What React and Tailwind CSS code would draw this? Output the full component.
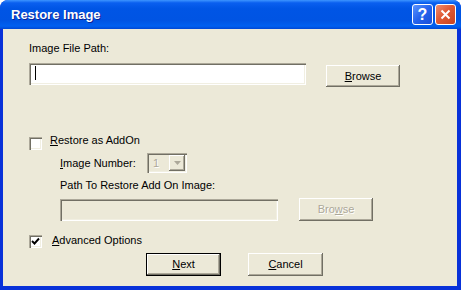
const sunken =
  "shadow-[inset_1px_1px_0_#aca899,inset_2px_2px_0_#716f64,inset_-1px_-1px_0_#ffffff,inset_-2px_-2px_0_#f1efe2]";
const raised =
  "shadow-[inset_-1px_-1px_0_#716f64,inset_1px_1px_0_#ffffff,inset_-2px_-2px_0_#aca899]";
const disabledText = "text-[#aca899] [text-shadow:1px_1px_0_#ffffff]";

function Button({ children, className = "", isDefault = false, disabled = false }) {
  return (
    <button
      className={`flex items-center justify-center bg-[#ece9d8] ${raised} ${
        isDefault ? "border border-black" : ""
      } ${disabled ? disabledText : "text-black"} ${className}`}
    >
      {children}
    </button>
  );
}

function Checkbox({ checked, className = "" }) {
  return (
    <div className={`w-[13px] h-[13px] shrink-0 bg-white ${sunken} flex items-center justify-center ${className}`}>
      {checked ? (
        <svg width="9" height="9" viewBox="0 0 9 9">
          <polyline points="1,4 3.5,6.5 8,1.5" fill="none" stroke="#000" strokeWidth="1.9" />
        </svg>
      ) : null}
    </div>
  );
}

export default function App() {
  return (
    <div className="w-[461px] h-[290px] bg-[#0831d9] rounded-t-[8px] flex flex-col overflow-hidden font-['Liberation_Sans',Arial,sans-serif]">
      <div className="h-[29px] shrink-0 flex items-center pl-[11px] pr-[5px] bg-[linear-gradient(180deg,#3d95ff_0%,#0a5fef_10%,#0055e5_30%,#0054e3_70%,#0060f0_90%,#0047d4_100%)]">
        <span className="flex-1 text-white font-bold text-[13px] leading-[16px] [text-shadow:1px_1px_0_#0c2596]">
          Restore Image
        </span>
        <div className="flex gap-[2px]">
          <div className="w-[21px] h-[21px] rounded-[3px] border border-white bg-[linear-gradient(135deg,#5b94ff_0%,#2563ec_50%,#1a4fd9_100%)] flex items-center justify-center text-white font-bold text-[16px] leading-none">
            ?
          </div>
          <div className="w-[21px] h-[21px] rounded-[3px] border border-white bg-[linear-gradient(135deg,#f08e6f_0%,#e05a35_45%,#c9431f_100%)] flex items-center justify-center">
            <svg width="11" height="11" viewBox="0 0 11 11">
              <path d="M1.5 1.5 L9.5 9.5 M9.5 1.5 L1.5 9.5" stroke="#fff" strokeWidth="2" />
            </svg>
          </div>
        </div>
      </div>

      <div className="flex-1 ml-[3px] mr-[4px] mb-[4px] bg-[#ece9d8] pl-[26px] pt-[13px] text-[11px] leading-[13px] text-black">
        <div>Image File Path:</div>
        <div className="mt-[8px] flex items-start">
          <div className={`relative w-[277px] h-[22px] bg-white ${sunken}`}>
            <div className="absolute left-[6px] top-[3px] w-px h-[14px] bg-black" />
          </div>
          <Button className="ml-[20px] mt-[2px] w-[74px] h-[22px]">
            <span className="underline">B</span>rowse
          </Button>
        </div>

        <div className="mt-[47px] flex items-start">
          <Checkbox className="mt-[3px]" />
          <span className="ml-[8px]">
            <span className="underline">R</span>estore as AddOn
          </span>
        </div>

        <div className="mt-[3px] ml-[31px] flex items-center h-[20px]">
          <span className="w-[87px]">
            <span className="underline">I</span>mage Number:
          </span>
          <div className={`w-[40px] h-[20px] bg-[#ece9d8] ${sunken} flex items-center pl-[6px] pr-[2px]`}>
            <span className={`flex-1 ${disabledText}`}>1</span>
            <div className={`w-[16px] h-[16px] bg-[#ece9d8] ${raised} flex items-center justify-center`}>
              <svg width="7" height="4" viewBox="0 0 7 4">
                <path d="M0 0 H7 L3.5 4 Z" fill="#aca899" />
              </svg>
            </div>
          </div>
        </div>

        <div className="mt-[6px] ml-[31px]">Path To Restore Add On Image:</div>
        <div className="mt-[7px] ml-[31px] flex items-start">
          <div className={`w-[218px] h-[22px] bg-[#ece9d8] ${sunken}`} />
          <Button disabled className="ml-[21px] -mt-[1px] w-[74px] h-[23px]">
            Bro<span className="underline">w</span>se
          </Button>
        </div>

        <div className="mt-[13px] flex items-start">
          <Checkbox checked className="mt-[1px]" />
          <span className="ml-[10px]">
            <span className="underline">A</span>dvanced Options
          </span>
        </div>

        <div className="mt-[5px] flex pl-[117px]">
          <Button isDefault className="w-[75px] h-[23px]">
            <span className="underline">N</span>ext
          </Button>
          <Button className="ml-[27px] w-[75px] h-[23px]">
            <span className="underline">C</span>ancel
          </Button>
        </div>
      </div>
    </div>
  );
}
